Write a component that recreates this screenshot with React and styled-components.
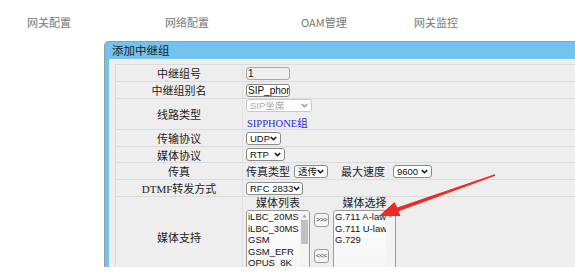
import styled, {createGlobalStyle} from 'styled-components';

const GlobalStyle = createGlobalStyle`
    html, body {
        margin: 0;
        background: #fff;
    }
    body {
        font-family: 'Noto Sans CJK SC', 'Noto Sans', sans-serif;
        font-size: 11px;
        color: #222;
    }
`;

const Page = styled.div`
    position: relative;
    width: 575px;
    height: 277px;
    overflow: hidden;
`;

const Nav = styled.nav`
    display: grid;
    grid-template-columns: 138px 136px 113px auto;
    padding: 15px 0 0 27px;
    height: 26px;
    color: #777;
    font-size: 11px;
    line-height: 14px;
`;

const Dialog = styled.section`
    margin-left: 104px;
    height: 225px;
    border-top: 1px solid #9c9c9c;
    border-left: 1px solid #9c9c9c;
    border-top-left-radius: 5px;
    background: #74c3ef;
    padding-left: 4px;
    overflow: hidden;
`;

const Title = styled.div`
    height: 17px;
    line-height: 17px;
    padding-left: 3px;
    font-size: 11.5px;
    color: #1a1a1a;
`;

const Body = styled.div`
    height: 100%;
    background: #eee;
    padding: 4px 0 0 6px;
    border-top: 1px solid #f6f6f6;
    box-sizing: border-box;
`;

const Table = styled.div`
    border-top: 1px solid #dcdcdc;
    border-left: 1px solid #dcdcdc;
`;

const Row = styled.div`
    display: flex;
    height: ${p => p.$h}px;
    border-bottom: 1px solid #dcdcdc;
`;

const Label = styled.div`
    width: 126px;
    flex: none;
    border-right: 1px solid #e2e2e2;
    display: flex;
    align-items: center;
    justify-content: center;
    font-size: 11px;
    color: #222;
    font-family: ${p => (p.$mono ? "'Liberation Serif', 'Noto Sans CJK SC', serif" : "'Noto Sans CJK SC', sans-serif")};
`;

const Value = styled.div`
    flex: 1;
    display: flex;
    flex-direction: ${p => (p.$col ? 'column' : 'row')};
    justify-content: ${p => (p.$col ? 'center' : 'flex-start')};
    align-items: ${p => (p.$col ? 'flex-start' : 'center')};
    gap: ${p => (p.$col ? 3 : 0)}px;
    padding-left: 3px;
`;

const Input = styled.div`
    width: 44px;
    height: 13px;
    box-sizing: border-box;
    border: 1px solid ${p => (p.$disabled ? '#a8a8a8' : '#8a8a8a')};
    border-radius: 3px;
    background: ${p => (p.$disabled ? '#f0f0f0' : '#fff')};
    font-family: 'Liberation Sans', Arial, sans-serif;
    font-size: 10px;
    line-height: 11px;
    padding-left: 1px;
    white-space: nowrap;
    overflow: hidden;
    color: #111;
`;

const Select = styled.div`
    width: ${p => p.$w}px;
    height: 13px;
    flex: none;
    box-sizing: border-box;
    border: 1px solid ${p => (p.$disabled ? '#c8c8c8' : '#8a8a8a')};
    border-radius: 3px;
    background: #fff;
    display: flex;
    align-items: center;
    justify-content: space-between;
    padding: 0 3px 0 3px;
    margin-left: ${p => p.$ml || 0}px;
    font-family: 'Liberation Sans', 'Noto Sans CJK SC', Arial, sans-serif;
    font-size: 9.5px;
    color: ${p => (p.$disabled ? '#a9a9a9' : '#111')};
    white-space: nowrap;
    overflow: hidden;

    svg {
        flex: none;
    }
`;

const Chevron = ({disabled}) => (
    <svg width="7" height="5" viewBox="0 0 7 5">
        <path
            d="M0.8 1 L3.5 3.7 L6.2 1"
            fill="none"
            stroke={disabled ? '#9a9a9a' : '#111'}
            strokeWidth="1.6"
        />
    </svg>
);

const Hint = styled.span`
    font-family: 'Liberation Serif', 'Noto Sans CJK SC', serif;
    font-size: 10.5px;
    color: #2b2bd8;
    padding-left: 1px;
`;

const Text = styled.span`
    font-size: 11px;
    margin-left: ${p => p.$ml || 0}px;
    margin-right: 4px;
`;

const MediaArea = styled.div`
    display: flex;
    align-items: flex-start;
    gap: 4px;
    padding-top: 1px;
`;

const MediaCol = styled.div`
    display: flex;
    flex-direction: column;
    align-items: center;
`;

const MediaHead = styled.div`
    font-size: 11px;
    line-height: 14px;
    height: 15px;
`;

const ListBox = styled.div`
    width: ${p => p.$w}px;
    height: 70px;
    box-sizing: border-box;
    border: 1px solid #9a9a9a;
    border-radius: 3px;
    background: linear-gradient(#fff, #f4f4f4);
    display: flex;
    overflow: hidden;
`;

const Items = styled.div`
    flex: 1;
    padding: 0 0 0 1px;
    font-family: 'Liberation Sans', Arial, sans-serif;
    font-size: 9.5px;
    line-height: 11.6px;
    color: #111;
    white-space: nowrap;
    overflow: hidden;
`;

const Scroll = styled.div`
    width: 9px;
    flex: none;
    background: #f3f3f3;
    display: flex;
    flex-direction: column;
    align-items: center;
`;

const ScrollUp = styled.div`
    height: 9px;
    width: 100%;
    display: flex;
    align-items: center;
    justify-content: center;
`;

const Thumb = styled.div`
    width: 7px;
    height: 24px;
    background: #c1c1c1;
`;

const Buttons = styled.div`
    display: flex;
    flex-direction: column;
    gap: 22px;
    padding-top: 18px;
`;

const MoveButton = styled.div`
    width: 15px;
    height: 14px;
    box-sizing: border-box;
    border: 1px solid #999;
    border-radius: 3px;
    background: #f6f6f6;
    font-family: 'Liberation Sans', Arial, sans-serif;
    font-size: 7px;
    line-height: 12px;
    text-align: center;
    letter-spacing: -0.5px;
    color: #333;
`;

const Arrow = styled.svg`
    position: absolute;
    left: 0;
    top: 0;
    pointer-events: none;
`;

const UpTri = () => (
    <svg width="5" height="4" viewBox="0 0 5 4">
        <path d="M2.5 0.5 L4.5 3.5 L0.5 3.5 Z" fill="#a3a3a3" />
    </svg>
);

const List = ({items, thumb, width}) => (
    <ListBox $w={width}>
        <Items>
            {items.map(i => (
                <div key={i}>{i}</div>
            ))}
        </Items>
        <Scroll>
            <ScrollUp>
                <UpTri />
            </ScrollUp>
            {thumb && <Thumb />}
        </Scroll>
    </ListBox>
);

export default function App() {
    return (
        <Page>
            <GlobalStyle />
            <Nav>
                <span>网关配置</span>
                <span>网络配置</span>
                <span>OAM管理</span>
                <span>网关监控</span>
            </Nav>
            <Dialog>
                <Title>添加中继组</Title>
                <Body>
                    <Table>
                        <Row $h={16}>
                            <Label>中继组号</Label>
                            <Value>
                                <Input $disabled>1</Input>
                            </Value>
                        </Row>
                        <Row $h={16}>
                            <Label>中继组别名</Label>
                            <Value>
                                <Input>SIP_phone</Input>
                            </Value>
                        </Row>
                        <Row $h={30}>
                            <Label>线路类型</Label>
                            <Value $col>
                                <Select $w={66} $disabled>
                                    SIP坐席 <Chevron disabled />
                                </Select>
                                <Hint>SIPPHONE组</Hint>
                            </Value>
                        </Row>
                        <Row $h={16}>
                            <Label>传输协议</Label>
                            <Value>
                                <Select $w={35}>
                                    UDP <Chevron />
                                </Select>
                            </Value>
                        </Row>
                        <Row $h={15}>
                            <Label>媒体协议</Label>
                            <Value>
                                <Select $w={39}>
                                    RTP <Chevron />
                                </Select>
                            </Value>
                        </Row>
                        <Row $h={16}>
                            <Label>传真</Label>
                            <Value>
                                <Text>传真类型</Text>
                                <Select $w={34}>
                                    透传 <Chevron />
                                </Select>
                                <Text $ml={13}>最大速度</Text>
                                <Select $w={39} $ml={4}>
                                    9600 <Chevron />
                                </Select>
                            </Value>
                        </Row>
                        <Row $h={16}>
                            <Label $mono>DTMF转发方式</Label>
                            <Value>
                                <Select $w={57}>
                                    RFC 2833 <Chevron />
                                </Select>
                            </Value>
                        </Row>
                        <Row $h={80}>
                            <Label>媒体支持</Label>
                            <Value>
                                <MediaArea>
                                    <MediaCol>
                                        <MediaHead>媒体列表</MediaHead>
                                        <List
                                            width={64}
                                            items={['iLBC_20MS', 'iLBC_30MS', 'GSM', 'GSM_EFR', 'OPUS_8K']}
                                            thumb
                                        />
                                    </MediaCol>
                                    <Buttons>
                                        <MoveButton>&gt;&gt;&gt;</MoveButton>
                                        <MoveButton>&lt;&lt;&lt;</MoveButton>
                                    </Buttons>
                                    <MediaCol>
                                        <MediaHead>媒体选择</MediaHead>
                                        <List
                                            width={63}
                                            items={['G.711 A-law', 'G.711 U-law', 'G.729']}
                                        />
                                    </MediaCol>
                                </MediaArea>
                            </Value>
                        </Row>
                    </Table>
                </Body>
            </Dialog>
            <Arrow width="575" height="277" viewBox="0 0 575 277">
                <polygon
                    points="379,216 400.5,216 398.6,211.2 495.3,175.7 494.7,174.3 397.2,207.4 394.5,202"
                    fill="#ee2a24"
                />
            </Arrow>
        </Page>
    );
}
